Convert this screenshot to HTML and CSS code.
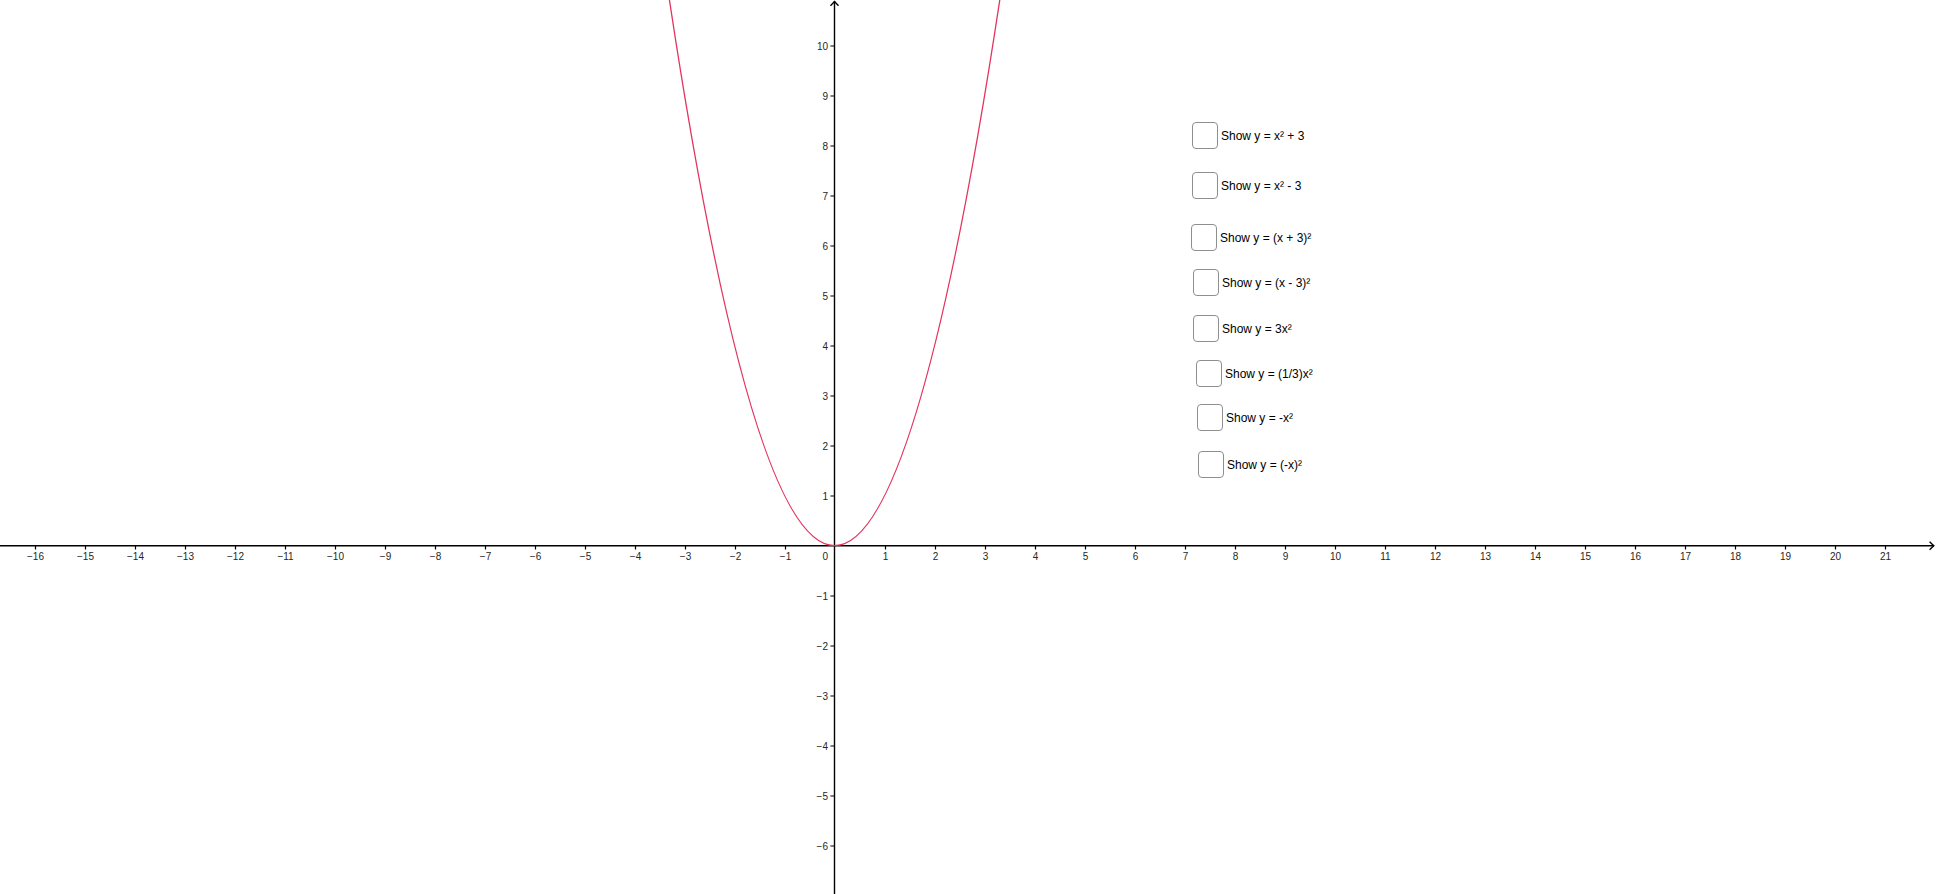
FILE: index.html
```html
<!DOCTYPE html>
<html>
<head>
<meta charset="utf-8">
<link rel="stylesheet" href="styles.css">
</head>
<body>
<div class="canvas">
<svg class="graph" width="1936" height="894" viewBox="0 0 1936 894" xmlns="http://www.w3.org/2000/svg">
  <g class="axes">
    <line x1="0" y1="545.8" x2="1934" y2="545.8"/>
    <line x1="834.5" y1="1" x2="834.5" y2="894"/>
    <polyline class="arrow" points="830.5,5.8 834.5,1.6 838.5,5.8"/>
    <polyline class="arrow" points="1929.6,541.8 1933.8,545.8 1929.6,549.8"/>
  </g>
  <path class="ticks" d="M35.5 546v3.6M85.5 546v3.6M135.5 546v3.6M185.5 546v3.6M235.5 546v3.6M285.5 546v3.6M335.5 546v3.6M385.5 546v3.6M435.5 546v3.6M485.5 546v3.6M535.5 546v3.6M585.5 546v3.6M635.5 546v3.6M685.5 546v3.6M735.5 546v3.6M785.5 546v3.6M885.5 546v3.6M935.5 546v3.6M985.5 546v3.6M1035.5 546v3.6M1085.5 546v3.6M1135.5 546v3.6M1185.5 546v3.6M1235.5 546v3.6M1285.5 546v3.6M1335.5 546v3.6M1385.5 546v3.6M1435.5 546v3.6M1485.5 546v3.6M1535.5 546v3.6M1585.5 546v3.6M1635.5 546v3.6M1685.5 546v3.6M1735.5 546v3.6M1785.5 546v3.6M1835.5 546v3.6M1885.5 546v3.6M834 46h-3.6M834 96h-3.6M834 146h-3.6M834 196h-3.6M834 246h-3.6M834 296h-3.6M834 346h-3.6M834 396h-3.6M834 446h-3.6M834 496h-3.6M834 596h-3.6M834 646h-3.6M834 696h-3.6M834 746h-3.6M834 796h-3.6M834 846h-3.6"/>
  <g class="xlabels">
    <text x="35.5" y="560">−16</text>
    <text x="85.5" y="560">−15</text>
    <text x="135.5" y="560">−14</text>
    <text x="185.5" y="560">−13</text>
    <text x="235.5" y="560">−12</text>
    <text x="285.5" y="560">−11</text>
    <text x="335.5" y="560">−10</text>
    <text x="385.5" y="560">−9</text>
    <text x="435.5" y="560">−8</text>
    <text x="485.5" y="560">−7</text>
    <text x="535.5" y="560">−6</text>
    <text x="585.5" y="560">−5</text>
    <text x="635.5" y="560">−4</text>
    <text x="685.5" y="560">−3</text>
    <text x="735.5" y="560">−2</text>
    <text x="785.5" y="560">−1</text>
    <text x="885.5" y="560">1</text>
    <text x="935.5" y="560">2</text>
    <text x="985.5" y="560">3</text>
    <text x="1035.5" y="560">4</text>
    <text x="1085.5" y="560">5</text>
    <text x="1135.5" y="560">6</text>
    <text x="1185.5" y="560">7</text>
    <text x="1235.5" y="560">8</text>
    <text x="1285.5" y="560">9</text>
    <text x="1335.5" y="560">10</text>
    <text x="1385.5" y="560">11</text>
    <text x="1435.5" y="560">12</text>
    <text x="1485.5" y="560">13</text>
    <text x="1535.5" y="560">14</text>
    <text x="1585.5" y="560">15</text>
    <text x="1635.5" y="560">16</text>
    <text x="1685.5" y="560">17</text>
    <text x="1735.5" y="560">18</text>
    <text x="1785.5" y="560">19</text>
    <text x="1835.5" y="560">20</text>
    <text x="1885.5" y="560">21</text>
  </g>
  <g class="ylabels">
    <text x="828" y="560">0</text>
    <text x="828" y="49.8">10</text>
    <text x="828" y="99.8">9</text>
    <text x="828" y="149.8">8</text>
    <text x="828" y="199.8">7</text>
    <text x="828" y="249.8">6</text>
    <text x="828" y="299.8">5</text>
    <text x="828" y="349.8">4</text>
    <text x="828" y="399.8">3</text>
    <text x="828" y="449.8">2</text>
    <text x="828" y="499.8">1</text>
    <text x="828" y="599.8">−1</text>
    <text x="828" y="649.8">−2</text>
    <text x="828" y="699.8">−3</text>
    <text x="828" y="749.8">−4</text>
    <text x="828" y="799.8">−5</text>
    <text x="828" y="849.8">−6</text>
  </g>
  <path class="curve" d="M664.6,-32.4 Q834.6,1123.6 1004.6,-32.4"/>
</svg>

<div class="opt" style="left:1192px;top:122px"><span class="box"></span><span class="lbl">Show y = x² + 3</span></div>
<div class="opt" style="left:1192px;top:172px"><span class="box"></span><span class="lbl">Show y = x² - 3</span></div>
<div class="opt" style="left:1191px;top:224px"><span class="box"></span><span class="lbl">Show y = (x + 3)²</span></div>
<div class="opt" style="left:1193px;top:269px"><span class="box"></span><span class="lbl">Show y = (x - 3)²</span></div>
<div class="opt" style="left:1193px;top:315px"><span class="box"></span><span class="lbl">Show y = 3x²</span></div>
<div class="opt" style="left:1196px;top:360px"><span class="box"></span><span class="lbl">Show y = (1/3)x²</span></div>
<div class="opt" style="left:1197px;top:404px"><span class="box"></span><span class="lbl">Show y = -x²</span></div>
<div class="opt" style="left:1198px;top:451px"><span class="box"></span><span class="lbl">Show y = (-x)²</span></div>
</div>
</body>
</html>
```

FILE: styles.css
```css
html, body {
  margin: 0;
  padding: 0;
  background: #ffffff;
  overflow: hidden;
}

.canvas {
  position: relative;
  width: 1936px;
  height: 894px;
  font-family: "Liberation Sans", Arial, sans-serif;
}

.graph {
  display: block;
}

.axes line,
.axes polyline {
  stroke: #000000;
  stroke-width: 1.4;
  fill: none;
}

.ticks {
  stroke: #000000;
  stroke-width: 1.2;
  fill: none;
}

.xlabels text,
.ylabels text {
  font-family: "Liberation Sans", Arial, sans-serif;
  font-size: 10px;
  fill: #262626;
}

.xlabels text {
  text-anchor: middle;
}

.ylabels text {
  text-anchor: end;
}

.curve {
  stroke: #e3345f;
  stroke-width: 1.3;
  fill: none;
}

.opt {
  position: absolute;
  display: flex;
  align-items: center;
  gap: 3px;
  height: 27px;
}

.box {
  box-sizing: border-box;
  width: 26px;
  height: 27px;
  border: 1.6px solid #8f8f8f;
  border-radius: 4px;
  background: #ffffff;
}

.lbl {
  font-size: 12px;
  color: #000000;
  white-space: nowrap;
  line-height: 14px;
}
```
